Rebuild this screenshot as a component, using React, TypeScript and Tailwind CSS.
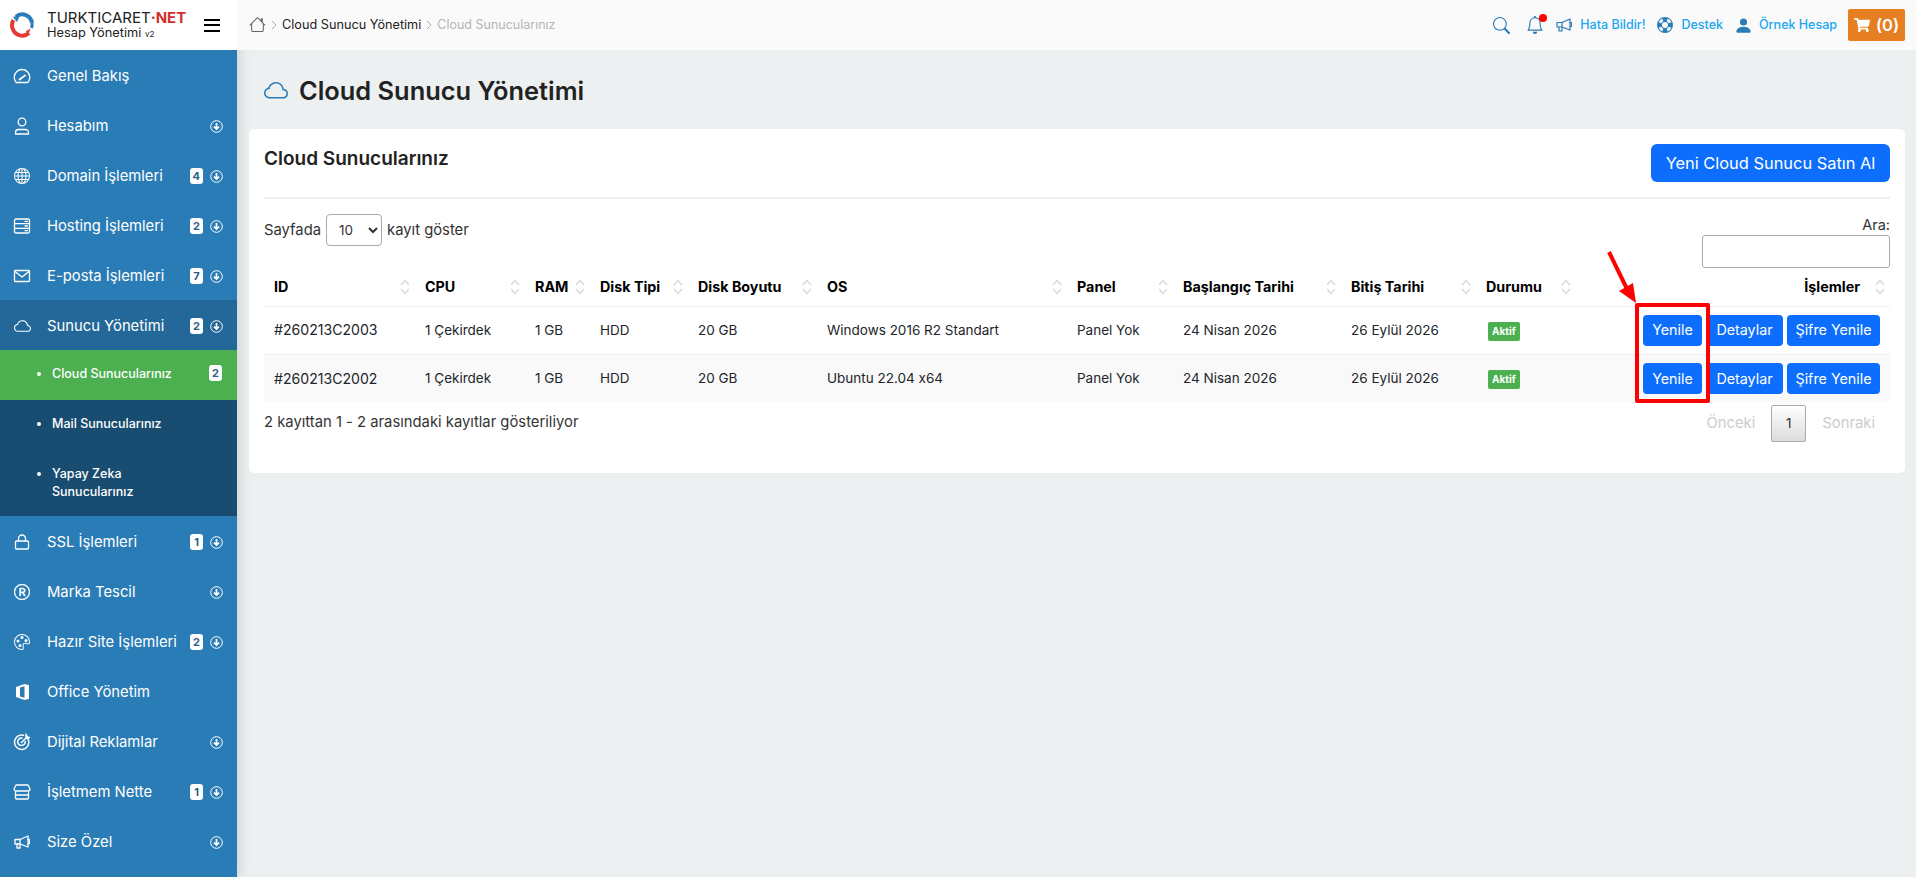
import React from 'react';
import type { ReactNode } from 'react';
import { BsBell, BsCloud, BsGlobe, BsHouse, BsLifePreserver, BsPalette, BsPersonFill, BsRCircle, BsSearch } from 'react-icons/bs';
import { FaShoppingCart } from 'react-icons/fa';

type NavItem = { label: string; icon: ReactNode; badge?: number; arrow?: boolean };

const Line = ({ children, w = 18, h = 18 }: { children: ReactNode; w?: number; h?: number }) => (
  <svg width={w} height={h} viewBox={`0 0 ${w} ${h}`} fill="none" stroke="currentColor" strokeWidth="1.300" strokeLinecap="round" strokeLinejoin="round">
    {children}
  </svg>
);

const GaugeIcon = () => (
  <Line h={16}>
    <path d="M3.200 14.500a7.800 7.800 0 1 1 11.600 0z" />
    <path d="M6.500 11.500 12 7.500" strokeWidth="1.800" />
  </Line>
);
const UserIcon = () => (
  <Line>
    <circle cx="9" cy="5" r="3.800" />
    <path d="M2.500 17v-1.500A3 3 0 0 1 5.500 12.500h7a3 3 0 0 1 3 3V17z" />
  </Line>
);
const ServerIcon = () => (
  <Line h={16}>
    <rect x="1.500" y="1" width="15" height="14" rx="1.500" />
    <path d="M1.500 5.600h15M1.500 10.300h15M12 3.300h2.500M12 8h2.500M12 12.700h2.500" />
  </Line>
);
const MailIcon = () => (
  <Line h={14}>
    <rect x="1.500" y="1.500" width="15" height="11" rx="1" />
    <path d="M2 2.500 9 8l7-5.500" />
  </Line>
);
const LockIcon = () => (
  <Line h={16}>
    <rect x="2.500" y="7" width="13" height="8" rx="1" />
    <path d="M5.500 7V4.500a3.500 3.500 0 0 1 7 0V7" />
  </Line>
);
const TargetIcon = () => (
  <Line>
    <path d="M15.500 7a7.200 7.200 0 1 1-5-4.700" strokeWidth="1.500" />
    <path d="M12.300 8.500A3.800 3.800 0 1 1 9 5" strokeWidth="1.500" />
    <path d="M8.500 9.500 13 5" strokeWidth="1.500" />
    <path d="M13 1l1 2.500L16.500 4.500l-2 1.500-1.500-1z" fill="currentColor" />
  </Line>
);
const StoreIcon = () => (
  <Line h={16}>
    <path d="M3 1h12l2 4a2 2 0 0 1-2 2H3a2 2 0 0 1-2-2z" />
    <path d="M2.500 7.500v6.500a1 1 0 0 0 1 1h11a1 1 0 0 0 1-1V7.500M2.500 11h13" />
  </Line>
);
const HornIcon = ({ sw = 1.300 }: { sw?: number }) => (
  <Line w={16} h={14}>
    <path d="M1 4.500h5L14 1v11L6 9H1z" strokeWidth={sw} />
    <path d="M6 4.500V9M3 9v4h3V9.500M14 4.500h1.500v4H14" strokeWidth={sw} />
  </Line>
);
const OfficeIcon = () => (
  <svg width="15" height="16" viewBox="0 0 15 16" fill="currentColor">
    <path d="M1 3 9.500 0 14 1.200v13.600L9.500 16 1 13zM9.500 2.300 5 3.400v9.200l4.500 1.100z" fillRule="evenodd" />
  </svg>
);
const DownIcon = () => (
  <svg width="13" height="13" viewBox="0 0 13 13" fill="none" stroke="currentColor">
    <circle cx="6.500" cy="6.500" r="5.800" strokeWidth="1" />
    <path d="M6.500 3v6M4 6.600l2.500 2.500L9 6.600" strokeWidth="1.700" />
  </svg>
);

const topItems: NavItem[] = [
  { label: 'Genel Bakış', icon: <GaugeIcon /> },
  { label: 'Hesabım', icon: <UserIcon />, arrow: true },
  { label: 'Domain İşlemleri', icon: <BsGlobe size={16} />, badge: 4, arrow: true },
  { label: 'Hosting İşlemleri', icon: <ServerIcon />, badge: 2, arrow: true },
  { label: 'E-posta İşlemleri', icon: <MailIcon />, badge: 7, arrow: true },
];

const bottomItems: NavItem[] = [
  { label: 'SSL İşlemleri', icon: <LockIcon />, badge: 1, arrow: true },
  { label: 'Marka Tescil', icon: <BsRCircle size={16} stroke="currentColor" strokeWidth={0.4} />, arrow: true },
  { label: 'Hazır Site İşlemleri', icon: <BsPalette size={16} />, badge: 2, arrow: true },
  { label: 'Office Yönetim', icon: <OfficeIcon /> },
  { label: 'Dijital Reklamlar', icon: <TargetIcon />, arrow: true },
  { label: 'İşletmem Nette', icon: <StoreIcon />, badge: 1, arrow: true },
  { label: 'Size Özel', icon: <HornIcon />, arrow: true },
];

const columns = [
  { label: 'ID', w: 'w-[151px]' },
  { label: 'CPU', w: 'w-[110px]' },
  { label: 'RAM', w: 'w-[65px]' },
  { label: 'Disk Tipi', w: 'w-[98px]' },
  { label: 'Disk Boyutu', w: 'w-[129px]' },
  { label: 'OS', w: 'w-[250px]' },
  { label: 'Panel', w: 'w-[106px]' },
  { label: 'Başlangıç Tarihi', w: 'w-[168px]' },
  { label: 'Bitiş Tarihi', w: 'w-[135px]' },
  { label: 'Durumu', w: 'w-[100px]' },
];

const rows = [
  { id: '#260213C2003', os: 'Windows 2016 R2 Standart' },
  { id: '#260213C2002', os: 'Ubuntu 22.04 x64' },
];

const SortIcon = () => (
  <svg width="12" height="18" viewBox="0 0 12 18" fill="none" stroke="#dcdcdc" strokeWidth="1.600" className="absolute right-[4px] top-1/2 -translate-y-1/2">
    <path d="M2 7 6 2.500 10 7M2 11l4 4.500L10 11" />
  </svg>
);

const Chevron = () => (
  <svg width="6" height="10" viewBox="0 0 6 10" fill="none" stroke="#aaa" strokeWidth="1" className="mx-[5px] shrink-0">
    <path d="M1 1l4 4-4 4" />
  </svg>
);

const Badge = ({ n }: { n: number }) => (
  <span className="flex h-[16px] min-w-[13px] items-center justify-center rounded-[3px] bg-white px-[3px] text-[11px] font-bold text-[#2a5f8a]">{n}</span>
);

const NavRow = ({ item }: { item: NavItem }) => (
  <div className="flex h-[50px] items-center pt-[2px] text-[14.800px] font-normal text-white">
    <div className="flex w-[47px] shrink-0 justify-center pr-[3px]">{item.icon}</div>
    <span className="flex-1 whitespace-nowrap">{item.label}</span>
    {item.badge !== undefined && <Badge n={item.badge} />}
    <div className="flex w-[34px] shrink-0 justify-center pr-[8px]">
      {item.arrow && <DownIcon />}
    </div>
  </div>
);

const SubRow = ({ label, badge, active, cls }: { label: ReactNode; badge?: number; active?: boolean; cls: string }) => (
  <div className={`flex items-start pl-[37px] pr-[15px] pt-[15px] text-[12.500px] font-medium leading-[18px] text-white ${cls} ${active ? 'bg-[#4caf50]' : ''}`}>
    <span className="mt-[7px] mr-[11px] h-[4px] w-[4px] shrink-0 rounded-full bg-white" />
    <span className="flex-1">{label}</span>
    {badge !== undefined && <Badge n={badge} />}
  </div>
);

const Logo = () => (
  <svg width="26" height="26" viewBox="0 0 26 26" fill="none" className="shrink-0">
    <path d="M4.500 8A10 10 0 0 0 4 17.500 10 10 0 0 0 20 21" stroke="#e53935" strokeWidth="4" />
    <path d="M20 21 16.500 19.500 21.500 16.500z" fill="#e53935" />
    <path d="M7 4.500A10 10 0 0 1 23 11" stroke="#2a7db8" strokeWidth="4" />
    <path d="M23 11A10 10 0 0 1 22.500 16" stroke="#2a7db8" strokeWidth="3" />
    <path d="M8 10 4 5l7-2z" fill="#2a7db8" />
  </svg>
);

const ActionButton = ({ children, cls }: { children: ReactNode; cls: string }) => (
  <button className={`h-[31px] rounded-[4px] bg-[#0d6efd] text-[14.300px] font-normal text-white ${cls}`}>{children}</button>
);

export default function App() {
  return (
    <div className="flex min-h-screen bg-[#ecf0f1] font-['Inter',sans-serif] text-[#212529] [font-feature-settings:'calt'_0]">
      {/* Sol menü */}
      <aside className="flex w-[237px] shrink-0 flex-col bg-[#2a7cb6] shadow-[0_0_14px_rgba(0,0,0,0.18)]">
        <div className="flex h-[50px] items-center bg-white pl-[9px]">
          <Logo />
          <div className="ml-[12px] w-[142px] leading-none text-[#222]">
            <div className="whitespace-nowrap text-[15px] font-normal leading-[17px]">
              TURKTICARET<span className="font-bold text-[#d32f2f]">·NET</span>
            </div>
            <div className="whitespace-nowrap text-[12.800px] font-normal leading-[13px]">
              Hesap Yönetimi <span className="text-[8px]">v2</span>
            </div>
          </div>
          <div className="ml-[15px] flex w-[16px] flex-col gap-[3.500px]">
            <span className="h-[2px] bg-black" />
            <span className="h-[2px] bg-black" />
            <span className="h-[2px] bg-black" />
          </div>
        </div>
        {topItems.map((item) => <NavRow key={item.label} item={item} />)}
        <div className="bg-[#236898]">
          <NavRow item={{ label: 'Sunucu Yönetimi', icon: <BsCloud size={17} />, badge: 2, arrow: true }} />
        </div>
        <div className="bg-[#184c70]">
          <SubRow label="Cloud Sunucularınız" badge={2} active cls="h-[50px]" />
          <SubRow label="Mail Sunucularınız" cls="h-[50px]" />
          <SubRow label={<>Yapay Zeka<br />Sunucularınız</>} cls="h-[66px]" />
        </div>
        {bottomItems.map((item) => <NavRow key={item.label} item={item} />)}
      </aside>

      <div className="flex min-w-0 flex-1 flex-col">
        {/* Üst bar */}
        <header className="flex h-[50px] items-center justify-between bg-[#fafafa] pl-[12px] pr-[11px] text-[12.500px]">
          <div className="flex items-center text-[#222]">
            <BsHouse size={17} className="text-[#666]" />
            <Chevron />
            <span className="text-[12.700px]">Cloud Sunucu Yönetimi</span>
            <Chevron />
            <span className="text-[#b5b5b5]">Cloud Sunucularınız</span>
          </div>
          <div className="flex items-center font-medium text-[#1ba6f2]">
            <BsSearch size={17} className="text-[#2a7cb6]" />
            <div className="relative ml-[16px] text-[#2a7cb6]">
              <BsBell size={18} />
              <span className="absolute right-[-3px] top-[-2px] h-[8px] w-[8px] rounded-full bg-[#f00]" />
            </div>
            <div className="ml-[12px] text-[#2a7cb6]"><HornIcon sw={1.200} /></div>
            <span className="ml-[8px]">Hata Bildir!</span>
            <BsLifePreserver size={16} className="ml-[12px] text-[#2a7cb6]" />
            <span className="ml-[8px]">Destek</span>
            <BsPersonFill size={19} className="ml-[11px] text-[#2a7cb6]" />
            <span className="ml-[6px]">Örnek Hesap</span>
            <div className="ml-[11px] flex h-[32px] w-[57px] items-center justify-center gap-[6px] rounded-[2px] bg-[#e67e22] text-[16.500px] font-semibold text-white">
              <FaShoppingCart size={16} />
              <span>(0)</span>
            </div>
          </div>
        </header>

        <main className="px-[12px] pr-[11px]">
          <div className="flex h-[79px] items-center pl-[15px] pt-[3px]">
            <BsCloud size={24} className="text-[#2a7cb6]" />
            <h1 className="ml-[11px] text-[25.400px] font-semibold text-[#222]">Cloud Sunucu Yönetimi</h1>
          </div>

          {/* Kart */}
          <section className="relative rounded-[5px] bg-white px-[15px] pb-[31px] pt-[15px]">
            <div className="flex items-start justify-between border-b-2 border-[#ecf0f1] pb-[15px]">
              <h2 className="mt-[1px] text-[19px] font-semibold text-[#222]">Cloud Sunucularınız</h2>
              <button className="h-[38px] w-[239px] rounded-[6px] bg-[#0d6efd] text-[16.400px] font-normal text-white">Yeni Cloud Sunucu Satın Al</button>
            </div>

            <div className="flex items-start justify-between">
              <div className="mt-[15px] flex items-center text-[14.800px] text-[#333]">
                Sayfada
                <select className="mx-[5px] h-[32px] w-[56px] rounded-[4px] border border-[#aaa] bg-white pl-[8px] text-[13.500px]" defaultValue="10">
                  <option>10</option>
                </select>
                kayıt göster
              </div>
              <div className="mt-[15px] flex flex-col items-end text-[14.500px] text-[#333]">
                <span className="leading-[21px]">Ara:</span>
                <input className="h-[33px] w-[188px] rounded-[3px] border border-[#aaa] bg-white" />
              </div>
            </div>

            <table className="w-[1626px] table-fixed border-collapse text-left text-[13.500px]">
              <thead>
                <tr className="h-[38px] border-b border-[#eee]">
                  {columns.map((c) => (
                    <th key={c.label} className={`relative pl-[10px] text-[14.300px] font-bold text-black ${c.w}`}>
                      {c.label}
                      <SortIcon />
                    </th>
                  ))}
                  <th className="relative pr-[30px] text-right text-[14.300px] font-bold text-black">
                    İşlemler
                    <SortIcon />
                  </th>
                </tr>
              </thead>
              <tbody>
                {rows.map((r, i) => (
                  <tr key={r.id} className={`h-[48px] ${i === 0 ? 'border-b border-[#eee]' : 'bg-[#f9f9f9]'}`}>
                    <td className="pl-[10px] text-[14.100px]">{r.id}</td>
                    <td className="pl-[10px]">1 Çekirdek</td>
                    <td className="pl-[10px]">1 GB</td>
                    <td className="pl-[10px]">HDD</td>
                    <td className="pl-[10px]">20 GB</td>
                    <td className="pl-[10px]">{r.os}</td>
                    <td className="pl-[10px]">Panel Yok</td>
                    <td className="pl-[10px]">24 Nisan 2026</td>
                    <td className="pl-[10px]">26 Eylül 2026</td>
                    <td className="pl-[12px]">
                      <span className="inline-block rounded-[2px] bg-[#4caf50] px-[4px] py-[3px] text-[10px] font-bold leading-[13px] text-white">Aktif</span>
                    </td>
                    <td className="pr-[10px]">
                      <div className="flex justify-end gap-[4px]">
                        <ActionButton cls="w-[59px]">Yenile</ActionButton>
                        <ActionButton cls="w-[77px]">Detaylar</ActionButton>
                        <ActionButton cls="w-[93px]">Şifre Yenile</ActionButton>
                      </div>
                    </td>
                  </tr>
                ))}
              </tbody>
            </table>

            <div className="mt-[3px] flex items-center justify-between text-[14.800px] text-[#333]">
              <span className="-mt-[3px]">2 kayıttan 1 - 2 arasındaki kayıtlar gösteriliyor</span>
              <div className="flex items-center text-[#ccc]">
                <span>Önceki</span>
                <span className="mx-[16px] flex h-[37px] w-[35px] items-center justify-center rounded-[2px] border border-[#aaa] bg-gradient-to-b from-white to-[#dcdcdc] text-[13.500px] text-[#333]">1</span>
                <span className="mr-[15px]">Sonraki</span>
              </div>
            </div>

            {/* Kırmızı işaret */}
            <div className="absolute left-[1386px] top-[174px] h-[100px] w-[75px] rounded-[2px] border-[4px] border-[#f00]" />
            <svg width="36" height="56" viewBox="0 0 36 56" className="absolute left-[1356px] top-[120px]">
              <path d="M4 3 23 42" stroke="#f00" strokeWidth="4" />
              <path d="M31 54 14 42 28 34z" fill="#f00" />
            </svg>
          </section>
        </main>
      </div>
    </div>
  );
}
